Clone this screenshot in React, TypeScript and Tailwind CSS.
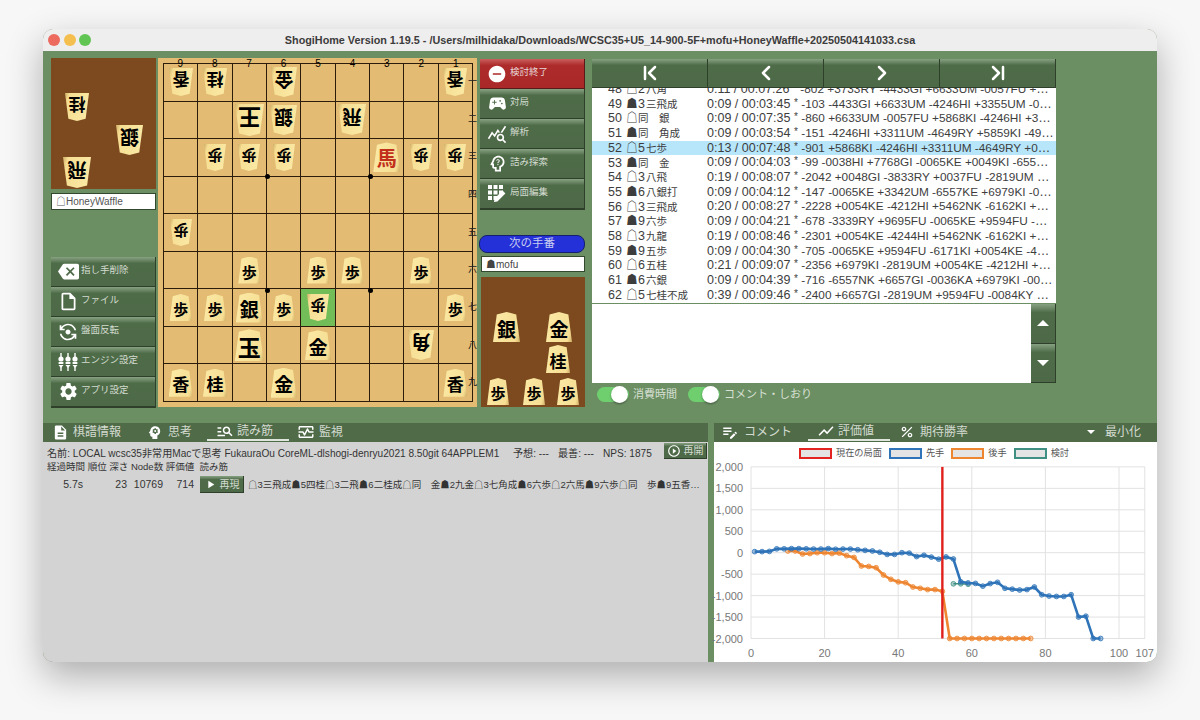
import type { ReactNode } from 'react';
import { ChevronFirst, ChevronLast, ChevronLeft, ChevronRight } from 'lucide-react';
import {
  MdBackspace,
  MdDescription,
  MdEditNote,
  MdFlipCameraAndroid,
  MdManageSearch,
  MdOutlineMonitorHeart,
  MdOutlineInsertDriveFile,
  MdOutlinePsychologyAlt,
  MdPercent,
  MdPlayArrow,
  MdPlayCircleOutline,
  MdPsychology,
  MdQueryStats,
  MdRemoveCircle,
  MdSettings,
  MdShowChart,
  MdSportsEsports,
} from 'react-icons/md';

const TITLE =
  'ShogiHome Version 1.19.5 - /Users/milhidaka/Downloads/WCSC35+U5_14-900-5F+mofu+HoneyWaffle+20250504141033.csa';

const BTN =
  'bg-[linear-gradient(#87a282,#4f6c49_22%,#4d6947)] border-r border-b border-[#2e4029] text-[#d3dbd0]';

// 9 to 1 from the left, "v" marks the opponent's pieces
const BOARD: string[][] = [
  ['v香', 'v桂', '', 'v金', '', '', '', '', 'v香'],
  ['', '', 'v王', 'v銀', '', 'v飛', '', '', ''],
  ['', 'v歩', 'v歩', 'v歩', '', '', '馬', 'v歩', 'v歩'],
  ['', '', '', '', '', '', '', '', ''],
  ['v歩', '', '', '', '', '', '', '', ''],
  ['', '', '歩', '', '歩', '歩', '', '歩', ''],
  ['歩', '歩', '銀', '歩', 'v歩', '', '', '', '歩'],
  ['', '', '玉', '', '金', '', '', 'v角', ''],
  ['香', '桂', '', '金', '', '', '', '', '香'],
];

const RANKS = ['一', '二', '三', '四', '五', '六', '七', '八', '九'];

const PIECE_SIZE: Record<string, string> = {
  歩: 'w-[22px] h-[27px] text-[15px]',
  香: 'w-[24px] h-[28px] text-[17px]',
  桂: 'w-[24px] h-[28px] text-[17px]',
  銀: 'w-[27px] h-[30px] text-[19px]',
  金: 'w-[26px] h-[30px] text-[19px]',
  角: 'w-[26px] h-[30px] text-[19px]',
  馬: 'w-[27px] h-[30px] text-[20px]',
  飛: 'w-[28px] h-[31px] text-[19px]',
  玉: 'w-[29px] h-[32px] text-[23px]',
  王: 'w-[29px] h-[32px] text-[23px]',
};

function Piece({ kind, gote }: { kind: string; gote?: boolean }) {
  return (
    <div
      className={`${PIECE_SIZE[kind]} ${gote ? 'rotate-180' : ''} ${kind === '馬' ? 'text-[#c2301c]' : 'text-black'} flex items-center justify-center pt-[2px] font-bold leading-none font-['Noto_Sans_CJK_JP',sans-serif] bg-[linear-gradient(105deg,#fbeaa6,#f6de93_85%,#cfae66)] [clip-path:polygon(50%_0,86%_8%,100%_100%,0_100%,14%_8%)]`}
    >
      {kind}
    </div>
  );
}

function Board() {
  return (
    <div className="relative w-[319px] h-[349px] bg-[#e3bb72] pt-[5px] pl-[5px]">
      <div className="relative w-[310px] h-[339px] grid grid-cols-9 grid-rows-9 border-t border-l border-[#2b1c0c]">
        {BOARD.flatMap((row, r) =>
          row.map((cell, c) => (
            <div
              key={`${r}-${c}`}
              className={`flex items-center justify-center border-r border-b border-[#2b1c0c] ${r === 6 && c === 4 ? 'bg-[#72bd58]' : ''}`}
            >
              {cell && <Piece kind={cell.replace('v', '')} gote={cell.startsWith('v')} />}
            </div>
          )),
        )}
        <span className="absolute left-[101px] top-[110px] w-[5px] h-[5px] rounded-full bg-black" />
        <span className="absolute left-[204px] top-[110px] w-[5px] h-[5px] rounded-full bg-black" />
        <span className="absolute left-[101px] top-[224px] w-[5px] h-[5px] rounded-full bg-black" />
        <span className="absolute left-[204px] top-[224px] w-[5px] h-[5px] rounded-full bg-black" />
      </div>
      <div className="absolute left-[5px] top-[1px] w-[310px] grid grid-cols-9 text-center text-[10px] leading-[9px] text-black">
        {[9, 8, 7, 6, 5, 4, 3, 2, 1].map((n) => (
          <span key={n}>{n}</span>
        ))}
      </div>
      <div className="absolute left-[310px] top-[5px] w-[9px] h-[339px] grid grid-rows-9 text-[9px] text-[#222]">
        {RANKS.map((n) => (
          <span key={n} className="flex items-center justify-center">
            {n}
          </span>
        ))}
      </div>
    </div>
  );
}

function SideButton({ icon, label, className }: { icon: ReactNode; label: string; className?: string }) {
  return (
    <div className={`${className ?? BTN} h-[30px] flex items-center pl-[5px] text-[9.5px] shadow-[0_1px_0_#2e4029]`}>
      <span className="w-[24px] flex justify-center text-white">{icon}</span>
      <span className="ml-[1px] pb-[2px]">{label}</span>
    </div>
  );
}

function SlidersIcon() {
  return (
    <svg width="20" height="20" viewBox="0 0 20 20" fill="white">
      {[3, 10, 17].map((x) => (
        <g key={x}>
          <rect x={x - 0.7} y="1" width="1.4" height="4" />
          <circle cx={x} cy="7" r="2.6" />
          <rect x={x - 2.4} y="10" width="4.8" height="2" />
          <path d={`M${x - 2.5} 13h5l-2.5 3z`} />
          <rect x={x - 0.7} y="15" width="1.4" height="4" />
        </g>
      ))}
    </svg>
  );
}

function EditGridIcon() {
  return (
    <svg width="20" height="20" viewBox="0 0 20 20" fill="white">
      {[1, 6.5, 12].map((y) =>
        [1, 6.5, 12].map((x) =>
          x === 12 && y === 12 ? null : <rect key={`${x}-${y}`} x={x} y={y} width="4" height="4" />,
        ),
      )}
      <path d="M7 18l.6-3.4 8-8 2.8 2.8-8 8z" />
    </svg>
  );
}

const RECORD: [string, string, string, string, boolean?][] = [
  ['48', '☖2八角', '0:11 / 00:07:26', '-802 +3733RY -4433GI +6633UM -0057FU +5868KI -4246HI +3311UM'],
  ['49', '☗3三飛成', '0:09 / 00:03:45', '-103 -4433GI +6633UM -4246HI +3355UM -0057FU +5868KI -4649RY'],
  ['50', '☖同　銀', '0:09 / 00:07:35', '-860 +6633UM -0057FU +5868KI -4246HI +3311UM -4649RY +0038HI'],
  ['51', '☗同　角成', '0:09 / 00:03:54', '-151 -4246HI +3311UM -4649RY +5859KI -4938RY +1112KY -0065KE'],
  ['52', '☖5七歩', '0:13 / 00:07:48', '-901 +5868KI -4246HI +3311UM -4649RY +0038HI -6557KE +6857KI', true],
  ['53', '☗同　金', '0:09 / 00:04:03', '-99 -0038HI +7768GI -0065KE +0049KI -6557NK +6857KI -3828RY'],
  ['54', '☖3八飛', '0:19 / 00:08:07', '-2042 +0048GI -3833RY +0037FU -2819UM +3736FU -1937UM +4857GI'],
  ['55', '☗6八銀打', '0:09 / 00:04:12', '-147 -0065KE +3342UM -6557KE +6979KI -0038HI +4233UM -3833RY'],
  ['56', '☖3三飛成', '0:20 / 00:08:27', '-2228 +0054KE -4212HI +5462NK -6162KI +6979KI -2819UM +9594FU'],
  ['57', '☗9六歩', '0:09 / 00:04:21', '-678 -3339RY +9695FU -0065KE +9594FU -6557NK +6857KI -0036KA'],
  ['58', '☖3九龍', '0:19 / 00:08:46', '-2301 +0054KE -4244HI +5462NK -6162KI +6979KI -2819UM +9594FU'],
  ['59', '☗9五歩', '0:09 / 00:04:30', '-705 -0065KE +9594FU -6171KI +0054KE -4212HI +5462NK -6162KI'],
  ['60', '☖6五桂', '0:21 / 00:09:07', '-2356 +6979KI -2819UM +0054KE -4212HI +5462NK -6162KI +9594FU'],
  ['61', '☗6六銀', '0:09 / 00:04:39', '-716 -6557NK +6657GI -0036KA +6979KI -0065KE +9594FU -3647KA'],
  ['62', '☖5七桂不成', '0:39 / 00:09:46', '-2400 +6657GI -2819UM +9594FU -0084KY +5463KE -6163KI +0054KE'],
];

function MoveText({ move }: { move: string }) {
  const [mark, digit] = [move[0], /[0-9]/.test(move[1]) ? move[1] : ''];
  return (
    <>
      <span className="inline-block w-[12px] text-[12px]">{mark}</span>
      {digit}
      <span className={`text-[10.5px] ${digit ? 'ml-[1px]' : ''}`}>{move.slice(digit ? 2 : 1)}</span>
    </>
  );
}

function RecordRow({ row }: { row: (typeof RECORD)[number] }) {
  const [no, move, time, pv, active] = row;
  return (
    <div className={`h-[14.7px] flex items-center pl-[16px] pr-[2px] text-[12.5px] leading-none text-[#3d3d3d] whitespace-nowrap ${active ? 'bg-[#b7e6fb]' : ''}`}>
      <span className="w-[18px]">{no}</span>
      <span className="w-[81px]">
        <MoveText move={move} />
      </span>
      <span className="min-w-0 flex-1 truncate">
        {time} <span className="text-[10px] align-top">*</span> <span className="text-[11.8px]">{pv}</span>
      </span>
    </div>
  );
}

function Toggle({ label }: { label: string }) {
  return (
    <div className="flex items-center">
      <div className="relative w-[32px] h-[15px] rounded-full bg-[#6fcf6f]">
        <span className="absolute right-[1px] top-[-1px] w-[17px] h-[17px] rounded-full bg-white shadow-[0_1px_2px_#0006]" />
      </div>
      <span className="ml-[4px] text-[11px] text-[#d8e0d4]">{label}</span>
    </div>
  );
}

function Tab({ icon, label, active, className }: { icon: ReactNode; label: string; active?: boolean; className: string }) {
  return (
    <div className={`${className} h-[18px] flex items-center whitespace-nowrap text-[12px] text-[#d3dbd0] ${active ? 'w-[82px] pl-[9px] gap-[3px] border-b-2 border-[#dfe6dc]' : ''}`}>
      <span className="text-white">{icon}</span>
      <span>{label}</span>
    </div>
  );
}

const BLUE: [number, number][] = [
  [1, 25], [3, 25], [5, 30], [7, 90], [9, 90], [11, 95], [13, 95], [15, 90], [17, 85], [19, 85], [21, 95], [23, 80],
  [25, 85], [27, 85], [29, 70], [31, 55], [33, 40], [35, 10], [37, -40], [39, -40], [41, 0], [43, -10], [45, -90],
  [47, -60], [49, -103], [51, -151], [53, -99], [55, -147], [57, -678], [59, -705], [61, -716], [63, -780], [65, -720],
  [67, -690], [69, -830], [71, -850], [73, -870], [75, -860], [77, -800], [79, -980], [81, -1010], [83, -1020],
  [85, -1020], [87, -980], [89, -1500], [91, -1480], [93, -2000], [95, -2000],
];
const ORANGE: [number, number][] = [
  [10, 40], [12, 40], [14, -30], [16, -20], [18, 0], [20, 0], [22, -20], [24, -10], [26, -70], [28, -110], [30, -310],
  [32, -320], [34, -350], [36, -520], [38, -620], [40, -680], [42, -700], [44, -800], [46, -830], [48, -860], [50, -860],
  [52, -901], [54, -2000], [56, -2000], [58, -2000], [60, -2000], [62, -2000], [64, -2000], [66, -2000], [68, -2000],
  [70, -2000], [72, -2000], [74, -2000], [76, -2000],
];
const TEAL: [number, number][] = [[55, -725], [57, -725], [59, -735]];

// px inside the svg, which starts at x 714 / y 462 of the page
const cx = (m: number) => 37 + m * 3.68;
const cy = (v: number) => 90.7 - v * 0.0429;

function Series({ data, color, width }: { data: [number, number][]; color: string; width: number }) {
  return (
    <g>
      <polyline
        points={data.map(([m, v]) => `${cx(m)},${cy(v)}`).join(' ')}
        fill="none"
        stroke={color}
        strokeWidth={width}
      />
      {data.map(([m, v]) => (
        <circle key={m} cx={cx(m)} cy={cy(v)} r="2.4" fill={color} fillOpacity="0.45" stroke={color} strokeWidth="0.8" />
      ))}
    </g>
  );
}

function LegendItem({ label, border }: { label: string; border: string }) {
  return (
    <div className="flex items-center gap-[4px]">
      <span className={`w-[33px] h-[11px] border-2 bg-[#e4e4e4] ${border}`} />
      <span className="text-[9.2px] text-[#555]">{label}</span>
    </div>
  );
}

function Chart() {
  const hs = [2000, 1500, 1000, 500, 0, -500, -1000, -1500, -2000];
  return (
    <svg width="443" height="198" className="overflow-visible">
      {hs.map((v) => (
        <g key={v}>
          <line x1="37" x2="431" y1={cy(v)} y2={cy(v)} stroke="#e2e2e2" strokeWidth="1" />
          <text x="29" y={cy(v) + 4} textAnchor="end" fontSize="11" fill="#777">
            {v.toLocaleString('en-US')}
          </text>
        </g>
      ))}
      {[0, 20, 40, 60, 80, 100, 107].map((m) => (
        <g key={m}>
          <line x1={cx(m)} x2={cx(m)} y1={cy(2000)} y2={cy(-2000)} stroke="#e2e2e2" strokeWidth="1" />
          <text x={cx(m)} y="195" textAnchor="middle" fontSize="11" fill="#777">
            {m}
          </text>
        </g>
      ))}
      <Series data={TEAL} color="#3f8f83" width={1.6} />
      <Series data={ORANGE} color="#ee8530" width={2.6} />
      <Series data={BLUE} color="#2f74b8" width={2.6} />
      <line x1={cx(52)} x2={cx(52)} y1={cy(2000)} y2={cy(-2000)} stroke="#e0201c" strokeWidth="2.4" />
    </svg>
  );
}

export default function App() {
  return (
    <div className="w-[1200px] h-[720px] overflow-hidden bg-[#f7f7f7] pl-[43px] pt-[29px] font-['Liberation_Sans','Noto_Sans_CJK_JP',sans-serif]">
      <div className="w-[1114px] h-[633px] rounded-[10px] overflow-hidden flex flex-col bg-[#6b8e63] shadow-[0_14px_36px_#0000004d]">
        <div className="relative h-[22px] shrink-0 bg-[#efeeee] flex items-center justify-center">
          <div className="absolute left-[5px] flex gap-[3.6px]">
            <span className="w-[12px] h-[12px] rounded-full bg-[#ec6a5e]" />
            <span className="w-[12px] h-[12px] rounded-full bg-[#f4bf4f]" />
            <span className="w-[12px] h-[12px] rounded-full bg-[#61c554]" />
          </div>
          <span className="text-[10.8px] font-bold text-[#3c3c3c] whitespace-nowrap">{TITLE}</span>
        </div>

        <div className="h-[372px] shrink-0 flex pl-[8px] pt-[7px]">
          <div className="w-[105px] h-[349px] flex flex-col">
            <div className="relative h-[131px] bg-[#7d4a20]">
              <div className="absolute left-[14px] top-[35px]"><Piece kind="桂" gote /></div>
              <div className="absolute left-[65px] top-[67px]"><Piece kind="銀" gote /></div>
              <div className="absolute left-[12px] top-[99px]"><Piece kind="飛" gote /></div>
            </div>
            <div className="mt-[4px] h-[17px] bg-white border border-[#33492e] pl-[4px] flex items-center text-[10px] text-[#555] whitespace-nowrap">
              ☖HoneyWaffle
            </div>
            <div className="mt-auto flex flex-col">
              <SideButton icon={<MdBackspace size={21} />} label="指し手削除" />
              <SideButton icon={<MdOutlineInsertDriveFile size={21} />} label="ファイル" />
              <SideButton icon={<MdFlipCameraAndroid size={20} />} label="盤面反転" />
              <SideButton icon={<SlidersIcon />} label="エンジン設定" />
              <SideButton icon={<MdSettings size={21} />} label="アプリ設定" />
            </div>
          </div>

          <div className="ml-[2px]"><Board /></div>

          <div className="ml-[2px] w-[106px] flex flex-col">
            <div className="pl-[1px] pt-[1px] flex flex-col">
              <SideButton
                icon={<MdRemoveCircle size={20} />}
                label="検討終了"
                className="bg-[linear-gradient(#c9605c,#ad2b2b_22%,#aa2828)] border-r border-b border-[#5a1a1a] text-[#e8d8d8]"
              />
              <SideButton icon={<MdSportsEsports size={21} />} label="対局" />
              <SideButton icon={<MdQueryStats size={20} />} label="解析" />
              <SideButton icon={<MdOutlinePsychologyAlt size={21} />} label="詰み探索" />
              <SideButton icon={<EditGridIcon />} label="局面編集" />
            </div>
            <div className="mt-[26px] h-[18px] rounded-[8px] bg-[#2430d8] border border-[#17206e] flex items-center justify-center text-[11.5px] text-[#c8cdf0]">
              次の手番
            </div>
            <div className="mt-[3px] ml-[2px] h-[16px] bg-white border border-[#33492e] pl-[4px] flex items-center text-[10px] text-[#444]">
              ☗mofu
            </div>
            <div className="relative mt-[5px] ml-[2px] h-[130px] bg-[#7d4a20]">
              <div className="absolute left-[12px] top-[35px]"><Piece kind="銀" /></div>
              <div className="absolute left-[65px] top-[35px]"><Piece kind="金" /></div>
              <div className="absolute left-[65px] top-[68px]"><Piece kind="桂" /></div>
              <div className="absolute left-[6px] top-[101px]"><Piece kind="歩" /></div>
              <div className="absolute left-[42px] top-[101px]"><Piece kind="歩" /></div>
              <div className="absolute left-[76px] top-[101px]"><Piece kind="歩" /></div>
            </div>
          </div>

          <div className="ml-[7px] w-[464px] flex flex-col">
            <div className="pt-[1px] grid grid-cols-4 h-[30px] shrink-0">
              <div className={`${BTN} flex items-center justify-center text-white`}><ChevronFirst size={24} strokeWidth={2.5} /></div>
              <div className={`${BTN} flex items-center justify-center text-white`}><ChevronLeft size={24} strokeWidth={2.5} /></div>
              <div className={`${BTN} flex items-center justify-center text-white`}><ChevronRight size={24} strokeWidth={2.5} /></div>
              <div className={`${BTN} flex items-center justify-center text-white`}><ChevronLast size={24} strokeWidth={2.5} /></div>
            </div>
            <div className="h-[215px] shrink-0 overflow-hidden bg-white">
              <div className="-mt-[6px]">
                {RECORD.map((row) => (
                  <RecordRow key={row[0]} row={row} />
                ))}
              </div>
            </div>
            <div className="mt-[1px] h-[79px] shrink-0 flex bg-white">
              <div className="flex-1" />
              <div className="w-[25px] flex flex-col">
                <div className={`${BTN} flex-1 flex items-center justify-center`}>
                  <span className="w-0 h-0 border-x-[6px] border-x-transparent border-b-[6px] border-b-white" />
                </div>
                <div className={`${BTN} flex-1 flex items-center justify-center`}>
                  <span className="w-0 h-0 border-x-[6px] border-x-transparent border-t-[6px] border-t-white" />
                </div>
              </div>
            </div>
            <div className="mt-[3px] pl-[5px] flex gap-[11px]">
              <Toggle label="消費時間" />
              <Toggle label="コメント・しおり" />
            </div>
          </div>
        </div>

        <div className="flex-1 flex justify-between">
          <div className="w-[665px] flex flex-col">
            <div className="h-[19px] shrink-0 bg-[#4f6b48] flex items-start">
              <Tab icon={<MdDescription size={17} />} label="棋譜情報" className="ml-[9px] gap-[4px]" />
              <Tab icon={<MdPsychology size={17} />} label="思考" className="ml-[25px] gap-[5px]" />
              <Tab icon={<MdManageSearch size={18} />} label="読み筋" active className="ml-[15px]" />
              <Tab icon={<MdOutlineMonitorHeart size={18} />} label="監視" className="ml-[8px] gap-[4px]" />
            </div>
            <div className="relative flex-1 bg-[#d3d3d3] pl-[4px] pt-[5px] text-[10.1px] leading-[13px] text-[#333]">
              <div className="flex whitespace-nowrap">
                <span className="w-[466px]">名前: LOCAL wcsc35非常用Macで思考 FukauraOu CoreML-dlshogi-denryu2021 8.50git 64APPLEM1</span>
                <span className="w-[45px]">予想: ---</span>
                <span className="w-[45px]">最善: ---</span>
                <span>NPS: 1875</span>
              </div>
              <div className="whitespace-pre text-[9.5px]">経過時間 順位 深さ Node数 評価値{'  '}読み筋</div>
              <div className="mt-[3px] h-[17px] flex items-center whitespace-nowrap text-[10.5px]">
                <span className="w-[36px] text-right">5.7s</span>
                <span className="w-[44px] text-right">23</span>
                <span className="w-[36px] text-right">10769</span>
                <span className="w-[31px] text-right">714</span>
                <div className={`${BTN} ml-[6px] w-[44px] h-[17px] flex items-center justify-center text-[10px]`}>
                  <MdPlayArrow size={13} className="text-white" />
                  <span className="ml-[3px]">再現</span>
                </div>
                <span className="ml-[4px] w-[453px] truncate text-[9.5px]">☖3三飛成☗5四桂☖3二飛☗6二桂成☖同　金☗2九金☖3七角成☗6六歩☖2六馬☗9六歩☖同　歩☗9五香☖同　歩☗同　香</span>
              </div>
              <div className={`${BTN} absolute right-[1px] top-[1px] w-[43px] h-[16px] flex items-center justify-center gap-[3px] text-[10px]`}>
                <MdPlayCircleOutline size={14} className="text-white" />
                再開
              </div>
            </div>
          </div>

          <div className="w-[443px] flex flex-col">
            <div className="h-[19px] shrink-0 bg-[#4f6b48] flex items-start">
              <Tab icon={<MdEditNote size={18} />} label="コメント" className="ml-[7px] gap-[5px]" />
              <Tab icon={<MdShowChart size={18} />} label="評価値" active className="ml-[16px]" />
              <Tab icon={<MdPercent size={16} />} label="期待勝率" className="ml-[9px] gap-[5px]" />
              <div className="ml-auto mr-[16px] h-[18px] flex items-center gap-[10px] text-[12px] text-[#d3dbd0]">
                <span className="w-0 h-0 border-x-[4px] border-x-transparent border-t-[4px] border-t-white" />
                最小化
              </div>
            </div>
            <div className="flex-1 bg-white">
              <div className="h-[20px] pt-[4px] flex items-center justify-center gap-[7px] pr-[3px]">
                <LegendItem label="現在の局面" border="border-[#e2231f]" />
                <LegendItem label="先手" border="border-[#2f74b8]" />
                <LegendItem label="後手" border="border-[#ee8530]" />
                <LegendItem label="検討" border="border-[#3f8f83]" />
              </div>
              <Chart />
            </div>
          </div>
        </div>
      </div>
    </div>
  );
}
